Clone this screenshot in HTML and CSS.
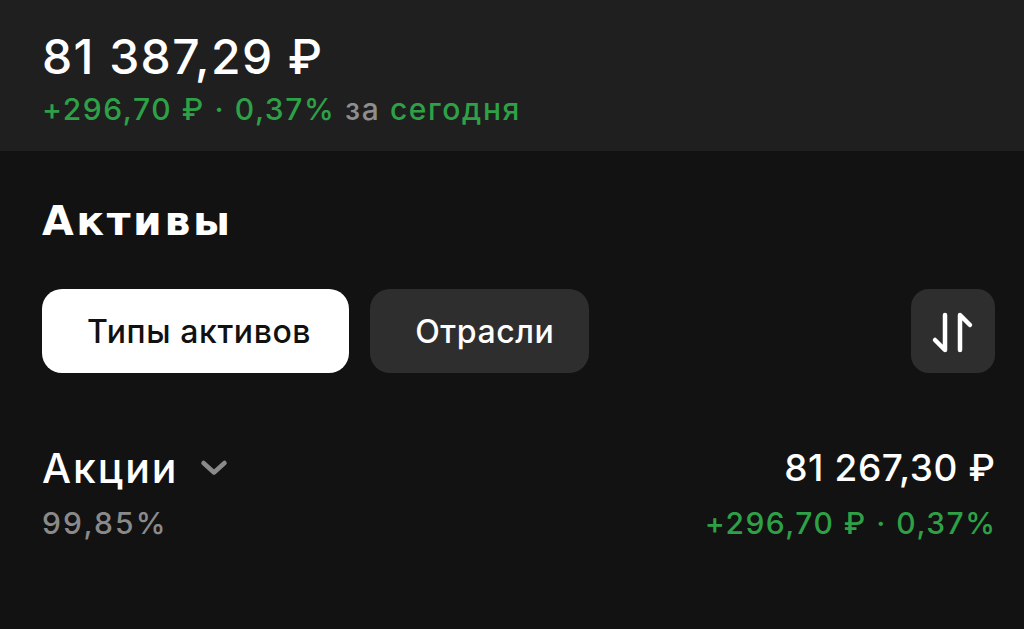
FILE: index.html
```html
<!DOCTYPE html>
<html lang="ru">
<head>
  <meta charset="UTF-8">
  <meta name="viewport" content="width=device-width, initial-scale=1.0">
  <title>Портфель</title>
  <link rel="stylesheet" href="styles.css">
</head>
<body>
  <div class="summary">
    <div class="total">81 387,29 ₽</div>
    <div class="change">
      <span class="green">+296,70 ₽ · 0,37%</span>
      <span class="muted">за</span>
      <span class="green">сегодня</span>
    </div>
  </div>

  <div class="assets">
    <h2 class="title">Активы</h2>

    <div class="toolbar">
      <div class="tabs">
        <span class="tab active">Типы активов</span>
        <span class="tab plain">Отрасли</span>
      </div>
      <span class="sort">
        <svg width="48" height="48" viewBox="0 0 48 48" fill="none" stroke="#fff" stroke-width="4.5" stroke-linecap="round" stroke-linejoin="round">
          <path d="M16 8 V43 L6 33"/>
          <path d="M31 43 V8 L41 18"/>
        </svg>
      </span>
    </div>

    <div class="row">
      <div class="col">
        <div class="name">
          Акции
          <svg class="chevron" width="28" height="18" viewBox="0 0 28 18" fill="none" stroke="#8a8a8a" stroke-width="4.5" stroke-linecap="round" stroke-linejoin="round">
            <path d="M3.5 4 L14 13.5 L24.5 4"/>
          </svg>
        </div>
        <div class="share">99,85%</div>
      </div>
      <div class="col right">
        <div class="amount">81 267,30 ₽</div>
        <div class="green small">+296,70 ₽ · 0,37%</div>
      </div>
    </div>
  </div>
</body>
</html>
```

FILE: styles.css
```css
* {
  margin: 0;
  padding: 0;
  box-sizing: border-box;
}
body {
  background-color: #121212;
  color: #fff;
  font-family: Inter, "Open Sans", sans-serif;
  font-weight: 500;
  width: 1024px;
  height: 629px;
  overflow: hidden;
}
.summary {
  background-color: #1f1f1f;
  padding: 29px 29px 0 42px;
  height: 151px;
}
.total {
  font-size: 48px;
  line-height: 56px;
  letter-spacing: 1.4px;
}
.change {
  margin-top: 7px;
  font-size: 30px;
  line-height: 34px;
  letter-spacing: 1.6px;
}
.green {
  color: #2ea147;
}
.muted {
  color: #8e8e8e;
}
.assets {
  padding: 46px 29px 0 42px;
}
.title {
  font-family: "DejaVu Sans", Inter, sans-serif;
  font-size: 41px;
  line-height: 48px;
  font-weight: 700;
  letter-spacing: 2.6px;
}
.toolbar {
  margin-top: 44px;
  display: flex;
  justify-content: space-between;
  align-items: center;
}
.tabs {
  display: flex;
  gap: 21px;
}
.tab {
  display: flex;
  align-items: center;
  height: 84px;
  padding: 0 38px 0 45px;
  border-radius: 20px;
  background-color: #2e2e2e;
  font-size: 32px;
  letter-spacing: 0.6px;
}
.tab.active {
  background-color: #fff;
  color: #111;
}
.tab.plain {
  padding-right: 35px;
}
.sort {
  display: flex;
  align-items: center;
  justify-content: center;
  width: 84px;
  height: 84px;
  border-radius: 18px;
  background-color: #2e2e2e;
}
.row {
  margin-top: 70px;
  display: flex;
  justify-content: space-between;
}
.col {
  display: flex;
  flex-direction: column;
}
.col.right {
  align-items: flex-end;
}
.name {
  display: flex;
  align-items: center;
  gap: 22px;
  font-size: 41px;
  line-height: 50px;
  letter-spacing: 2px;
}
.amount {
  font-size: 37px;
  line-height: 50px;
  letter-spacing: 0.6px;
  margin-right: -0.6px;
}
.share,
.small {
  margin-top: 13px;
  font-size: 30px;
  line-height: 34px;
  letter-spacing: 1.5px;
}
.small {
  margin-right: -1.5px;
}
.share {
  color: #8a8a8a;
  letter-spacing: 2.2px;
}
```
